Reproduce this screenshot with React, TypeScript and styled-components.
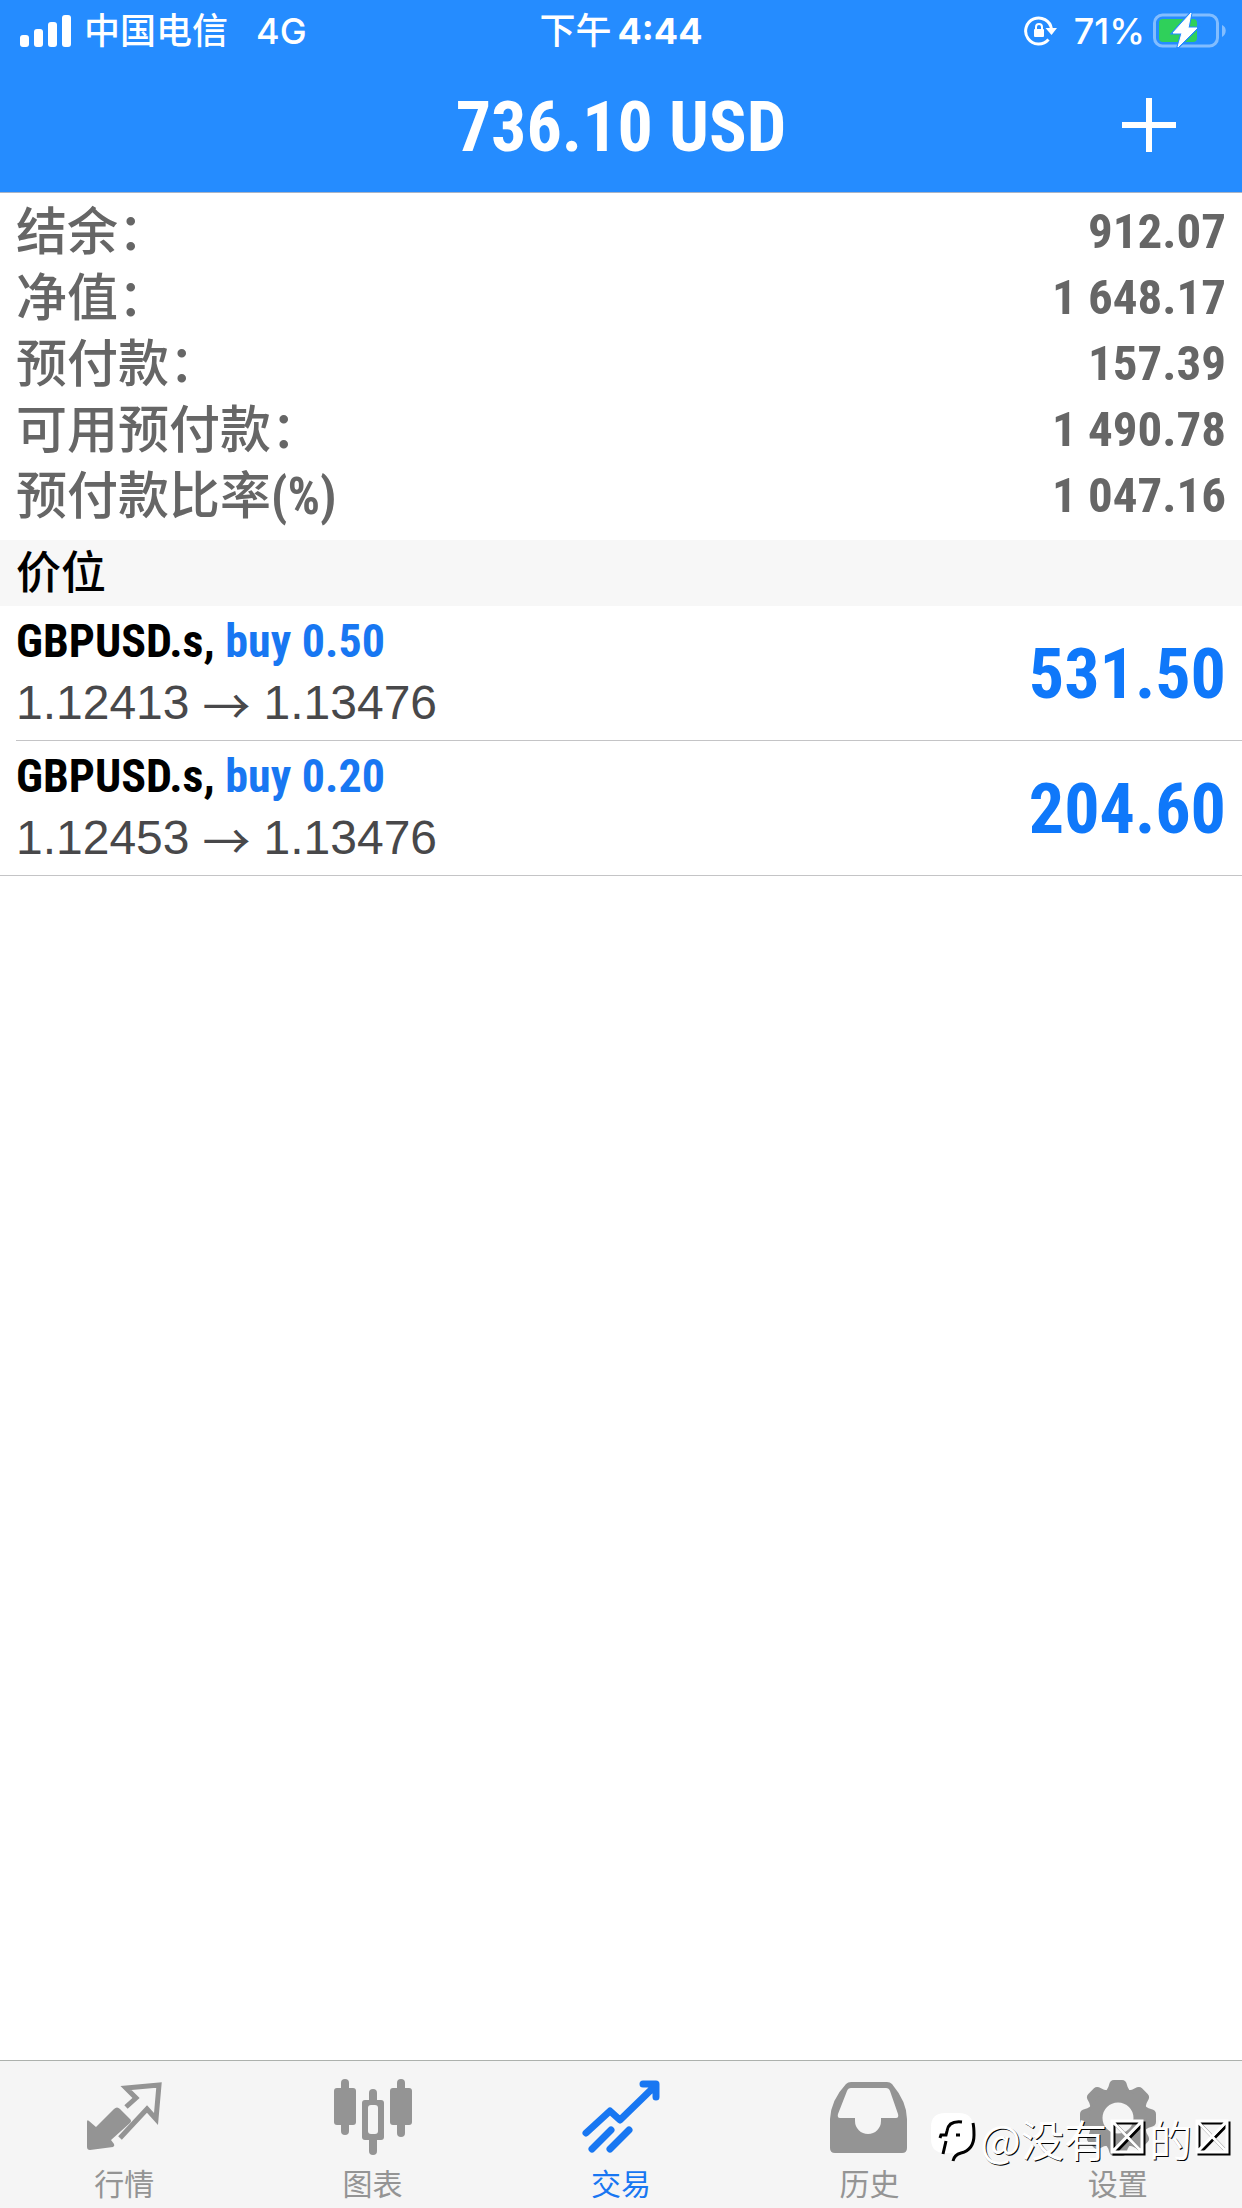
import React from 'react';
import styled, { createGlobalStyle } from 'styled-components';

const sans = "'Liberation Sans', 'Noto Sans CJK SC', sans-serif";
const narrow = "'Roboto Condensed', 'Liberation Sans', 'Noto Sans CJK SC', sans-serif";
const system = "Inter, 'Noto Sans CJK SC', sans-serif";
const cjk = "'Noto Sans CJK SC', sans-serif";

const GlobalStyle = createGlobalStyle`
  * { box-sizing: border-box; }
  body { margin: 0; background: #fff; font-family: ${sans}; }
`;

const Screen = styled.div`
  position: relative;
  display: flex;
  flex-direction: column;
  min-height: 100vh;
`;

const Header = styled.header`
  background: #258cff;
  color: #fff;
  border-bottom: 1px solid #a9b4c6;
`;

const StatusBar = styled.div`
  display: grid;
  grid-template-columns: 1fr auto 1fr;
  align-items: center;
  height: 62px;
  padding: 0 16px 0 20px;
  font: 500 36px/60px ${system};
`;

const StatusGroup = styled.div<{ $end?: boolean }>`
  display: flex;
  align-items: center;
  justify-content: ${(p) => (p.$end ? 'flex-end' : 'flex-start')};
`;

const Carrier = styled.span`
  margin: 0 28px 0 12px;
`;

const Clock = styled.time`
  display: flex;
  gap: 6px;
  padding-right: 4px;
  b { font-weight: 700; }
`;

const Percent = styled.span`
  margin: 0 8px 0 16px;
`;

const TitleBar = styled.div`
  display: grid;
  grid-template-columns: 1fr auto 1fr;
  align-items: center;
  height: 130px;
  padding: 0 58px;
`;

const Title = styled.h1`
  grid-column: 2;
  margin: 0;
  font: 700 70px/88px ${narrow};
`;

const AddButton = styled.button`
  justify-self: end;
  display: flex;
  padding: 0 0 4px;
  border: 0;
  background: none;
  color: inherit;
`;

const Summary = styled.dl`
  margin: 0;
  padding: 6px 16px 11px;
  color: #666;
`;

const SummaryRow = styled.div`
  display: flex;
  justify-content: space-between;
  align-items: center;
  height: 66px;
`;

const Label = styled.dt`
  padding-top: 2px;
  font: 500 51px/64px ${narrow};
  b { font-weight: 700; }
`;

const Amount = styled.dd`
  margin: 0;
  font: 700 49px/66px ${narrow};
`;

const SectionTitle = styled.h2`
  margin: 0;
  padding: 2px 16px 0;
  background: #f7f7f7;
  color: #000;
  font: 500 45px/64px ${sans};
`;

const Positions = styled.ul`
  flex: 1;
  margin: 0;
  padding: 0;
  list-style: none;
`;

const Position = styled.li`
  display: flex;
  justify-content: space-between;
  align-items: center;
  margin-left: 16px;
  padding: 4px 16px 6px 0;
  border-bottom: 1px solid #c4c4c6;
  &:last-child { margin-left: 0; padding-left: 16px; }
`;

const Deal = styled.div`
  font: 700 46px/62px ${narrow};
  color: #000;
  span { color: #1877f2; }
`;

const Prices = styled.div`
  display: flex;
  gap: 13px;
  font: 400 48px/62px ${sans};
  color: #48484a;
`;

const Arrow = styled.span`
  font-family: ${cjk};
`;

const Profit = styled.div`
  padding-top: 4px;
  font: 700 70px/88px ${narrow};
  color: #0f78fa;
`;

const TabBar = styled.nav`
  display: grid;
  grid-template-columns: repeat(5, 1fr);
  height: 148px;
  border-top: 1px solid #adb1ad;
  background: #f5f5f5;
`;

const Tab = styled.button<{ $active?: boolean }>`
  display: flex;
  flex-direction: column;
  align-items: center;
  padding: 18px 0 0;
  border: 0;
  background: none;
  color: ${(p) => (p.$active ? '#1877f2' : '#949494')};
  font: 400 30px/44px ${sans};
  svg { display: block; margin-bottom: 6px; }
`;

const Watermark = styled.div`
  position: absolute;
  right: 8px;
  bottom: 40px;
  display: flex;
  align-items: center;
  color: #fff;
  font: 400 43px/60px ${cjk};
  text-shadow: 1px 1px 0 #000;
  pointer-events: none;
`;

const Signal = () => (
  <svg width="52" height="34" viewBox="0 0 52 34" fill="#fff">
    <rect x="0" y="21" width="9" height="12" rx="3" />
    <rect x="14" y="15" width="9" height="18" rx="3" />
    <rect x="28" y="8" width="9" height="25" rx="3" />
    <rect x="42" y="1" width="9" height="32" rx="3" />
  </svg>
);

const RotationLock = () => (
  <svg width="34" height="32" viewBox="0 0 34 32">
    <path d="M24.5 24.5A13 13 0 1 1 27.5 14" fill="none" stroke="#fff" strokeWidth="3" />
    <path d="M21.500 13H33L27.500 20Z" fill="#fff" />
    <rect x="10" y="14" width="10" height="8" rx="1" fill="#fff" />
    <path d="M12 14V12a3 3 0 0 1 6 0v2" fill="none" stroke="#fff" strokeWidth="2" />
  </svg>
);

const Battery = () => (
  <svg width="73" height="36" viewBox="0 0 73 36">
    <rect x="1.500" y="2" width="63" height="31" rx="8" fill="none" stroke="#82bdff" strokeWidth="3" />
    <path d="M69 12c5 2 5 9 0 12z" fill="#82bdff" />
    <rect x="6" y="6" width="38" height="23" rx="4" fill="#2fd05a" />
    <path d="M38 0 20 20h9l-4 14L44 15h-9z" fill="#fff" stroke="#258cff" strokeWidth="3" />
    <path d="M38 0 20 20h9l-4 14L44 15h-9z" fill="#fff" stroke="#fff" strokeLinejoin="round" />
  </svg>
);

const QuotesIcon = () => (
  <svg width="78" height="78" viewBox="0 0 78 78">
    <path d="M2 43q0-3 2-1l7 6 18-18q3-3 6 0l10 10q2 2 0 4L26 61l3 4q1 2-1 3L5 71q-3 0-3-3z" fill="currentColor" />
    <path d="M41 28l10-9-10-10 33-3-3 34-9-10-27 29" fill="none" stroke="currentColor" strokeWidth="5" />
  </svg>
);

const ChartIcon = () => (
  <svg width="78" height="78" viewBox="0 0 78 78" fill="currentColor">
    <rect x="7" y="0" width="8" height="56" rx="4" />
    <rect x="0" y="9" width="22" height="37" rx="3" />
    <rect x="63" y="0" width="8" height="58" rx="4" />
    <rect x="56" y="9" width="22" height="37" rx="3" />
    <rect x="35" y="10" width="8" height="66" rx="4" />
    <rect x="28" y="21" width="22" height="40" rx="3" />
    <rect x="34" y="26" width="10" height="29" rx="3" fill="#f5f5f5" />
  </svg>
);

const TradeIcon = () => (
  <svg width="78" height="78" viewBox="0 0 78 78" fill="none" stroke="currentColor" strokeWidth="7" strokeLinecap="round" strokeLinejoin="round">
    <path d="M4 54 28 32l10 9L73 7M61 5h13v13M10 70l19-19M28 70l19-19" />
  </svg>
);

const HistoryIcon = () => (
  <svg width="78" height="78" viewBox="0 0 78 78" fill="currentColor" fillRule="evenodd">
    <path d="M16 5q2-2 5-2h36q3 0 5 2 15 18 15 35v29q0 5-5 5H5q-5 0-5-5V40Q1 21 16 5zM21 9q-3 0-4 3L8 35q-1 4 2 4h15v3a13 13 0 0 0 26 0v-3h15q3 0 2-4L60 12q-1-3-4-3z" />
  </svg>
);

const teeth = Array.from({ length: 8 }, (_, i) => i * 45);

const SettingsIcon = () => (
  <svg width="78" height="78" viewBox="0 0 78 78" fill="currentColor">
    {teeth.map((angle) => (
      <path key={angle} d="M24 14q5-3 6-8 1-5 5-5h8q4 0 5 5 1 5 6 8z" transform={`rotate(${angle} 39 39)`} />
    ))}
    <circle cx="39" cy="39" r="22" fill="none" stroke="currentColor" strokeWidth="13" />
  </svg>
);

const WatermarkLogo = () => (
  <svg width="50" height="54" viewBox="0 0 50 54">
    <path d="M15 2h14q14 0 14 14v8q0 14-12 17l-8 9v-8h-8Q1 42 1 28V16Q1 2 15 2z" fill="#fff" />
    <path d="M43 12q1 4 1 12c0 10-5 16-13 18-4 1-7 3-8 8" fill="none" stroke="#000" strokeWidth="3" />
    <path d="M32 11c-9-1-14 2-15 9l-1 4h-5l-1 3M16 30l-3 13M26 24h4" fill="none" stroke="#000" strokeWidth="3" />
  </svg>
);

const CrossedBox = () => (
  <svg width="42" height="42" viewBox="0 0 42 42" fill="none" strokeWidth="3">
    <path d="M5 4h30v31H5zl30 31M35 4 5 35" stroke="#000" transform="translate(2 2)" />
    <path d="M5 4h30v31H5zl30 31M35 4 5 35" stroke="#fff" />
  </svg>
);

const balances = [
  { label: '结余：', amount: '912.07' },
  { label: '净值：', amount: '1 648.17' },
  { label: '预付款：', amount: '157.39' },
  { label: '可用预付款：', amount: '1 490.78' },
  { label: '预付款比率', unit: '(%)', amount: '1 047.16' },
];

const positions = [
  { symbol: 'GBPUSD.s', side: 'buy 0.50', open: '1.12413', current: '1.13476', profit: '531.50' },
  { symbol: 'GBPUSD.s', side: 'buy 0.20', open: '1.12453', current: '1.13476', profit: '204.60' },
];

const tabs = [
  { name: '行情', Icon: QuotesIcon },
  { name: '图表', Icon: ChartIcon },
  { name: '交易', Icon: TradeIcon, active: true },
  { name: '历史', Icon: HistoryIcon },
  { name: '设置', Icon: SettingsIcon },
];

export default function App() {
  return (
    <Screen>
      <GlobalStyle />
      <Header>
        <StatusBar>
          <StatusGroup>
            <Signal />
            <Carrier>中国电信</Carrier>
            <span>4G</span>
          </StatusGroup>
          <Clock>
            <span>下午</span>
            <b>4:44</b>
          </Clock>
          <StatusGroup $end>
            <RotationLock />
            <Percent>71%</Percent>
            <Battery />
          </StatusGroup>
        </StatusBar>
        <TitleBar>
          <Title>736.10 USD</Title>
          <AddButton aria-label="新订单">
            <svg width="62" height="54" viewBox="0 0 62 54" stroke="#fff" strokeWidth="6">
              <path d="M0 27h54M27 0v54" />
            </svg>
          </AddButton>
        </TitleBar>
      </Header>
      <Summary>
        {balances.map(({ label, unit, amount }) => (
          <SummaryRow key={label}>
            <Label>
              {label}
              {unit && <b>{unit}</b>}
            </Label>
            <Amount>{amount}</Amount>
          </SummaryRow>
        ))}
      </Summary>
      <SectionTitle>价位</SectionTitle>
      <Positions>
        {positions.map((p) => (
          <Position key={p.open}>
            <div>
              <Deal>
                {p.symbol}, <span>{p.side}</span>
              </Deal>
              <Prices>
                <span>{p.open}</span>
                <Arrow>→</Arrow>
                <span>{p.current}</span>
              </Prices>
            </div>
            <Profit>{p.profit}</Profit>
          </Position>
        ))}
      </Positions>
      <TabBar>
        {tabs.map(({ name, Icon, active }) => (
          <Tab key={name} $active={active} aria-current={active ? 'page' : undefined}>
            <Icon />
            {name}
          </Tab>
        ))}
      </TabBar>
      <Watermark>
        <WatermarkLogo />
        <span>@没有</span>
        <CrossedBox />
        <span>的</span>
        <CrossedBox />
      </Watermark>
    </Screen>
  );
}
